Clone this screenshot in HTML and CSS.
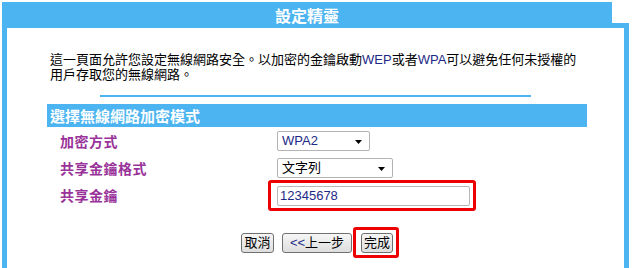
FILE: index.html
```html
<!DOCTYPE html>
<html lang="zh-Hant">
<head>
<meta charset="utf-8">
<title>設定精靈</title>
<link rel="stylesheet" href="styles.css">
</head>
<body>
<div class="wizard">
  <div class="top">
    <div class="title">設定精靈</div>
    <div class="notch"></div>
  </div>
  <div class="frame">
    <p class="intro">這一頁面允許您設定無線網路安全。以加密的金鑰啟動<span class="lat">WEP</span>或者<span class="lat">WPA</span>可以避免任何未授權的用戶存取您的無線網路。</p>
    <div class="rule"></div>
    <div class="section">選擇無線網路加密模式</div>
    <div class="form">
      <div class="label">加密方式</div>
      <div class="ctl">
        <div class="sel sel-a">
          <select><option>WPA2</option></select>
          <svg class="arrow" width="7" height="4" viewBox="0 0 7 4"><path d="M0 0H7L3.5 4Z" fill="#000"/></svg>
        </div>
      </div>
      <div class="label">共享金鑰格式</div>
      <div class="ctl">
        <div class="sel sel-b">
          <select><option>文字列</option></select>
          <svg class="arrow" width="7" height="4" viewBox="0 0 7 4"><path d="M0 0H7L3.5 4Z" fill="#000"/></svg>
        </div>
      </div>
      <div class="label">共享金鑰</div>
      <div class="ctl">
        <div class="mark mark-input"><input class="key" type="text" value="12345678"></div>
      </div>
    </div>
    <div class="actions">
      <button class="btn btn-cancel">取消</button>
      <button class="btn btn-back"><span class="lat">&lt;&lt;</span>上一步</button>
      <div class="mark mark-btn"><button class="btn btn-done">完成</button></div>
    </div>
  </div>
</div>
</body>
</html>
```

FILE: styles.css
```css
* { box-sizing: border-box; }
html, body { margin: 0; padding: 0; background: #fff; }
body {
  font-family: "Liberation Sans", "Noto Sans CJK TC", sans-serif;
  font-size: 13px;
  color: #000;
  width: 632px;
  height: 268px;
  overflow: hidden;
}
.wizard { padding: 2px 0 0 2px; width: 629px; }
.top { display: flex; }
.title {
  width: 610px;
  height: 26px;
  line-height: 26px;
  background: #4cb4f0;
  color: #fff;
  font-weight: bold;
  font-size: 16px;
  text-align: center;
  font-family: "Noto Sans CJK TC", sans-serif;
}
.notch { width: 17px; height: 5px; margin-top: 21px; background: #4cb4f0; }
.frame {
  width: 627px;
  height: 240px;
  border-left: 5px solid #4cb4f0;
  border-right: 5px solid #4cb4f0;
}
.intro {
  margin: 0;
  padding: 24px 0 0 43px;
  width: 575px;
  line-height: 15px;
}
.lat { color: #1c2a86; }
.rule { margin: 13px 0 0 93px; width: 431px; height: 2px; background: #4cb4f0; }
.section {
  margin: 7px 0 0 40px;
  width: 540px;
  height: 23px;
  line-height: 23px;
  padding-left: 3px;
  background: #4cb4f0;
  color: #fff;
  font-weight: bold;
  font-size: 15px;
  font-family: "Noto Sans CJK TC", sans-serif;
}
.form {
  display: grid;
  grid-template-columns: 217px auto;
  grid-template-rows: 27px 27px 28px;
  padding-left: 53px;
  align-items: center;
}
.label {
  color: #993399;
  font-weight: bold;
  font-size: 14px;
  letter-spacing: 0.5px;
  font-family: "Noto Sans CJK TC", sans-serif;
}
.ctl { display: flex; align-items: center; }
.sel { position: relative; height: 20px; }
.sel select {
  appearance: none;
  -webkit-appearance: none;
  height: 20px;
  border: 1px solid #b4b4b4;
  border-radius: 2px;
  background: #fff;
  font-family: "Liberation Sans", "Noto Sans CJK TC", sans-serif;
  font-size: 13px;
  color: #1c2a86;
  padding: 0 0 0 4px;
  margin: 0;
  outline: none;
}
.sel-a select { width: 93px; }
.sel-b select { width: 116px; color: #000; }
.arrow { position: absolute; right: 8px; top: 9px; }
.mark {
  display: inline-flex;
  border: 3px solid #ee0000;
  border-radius: 3px;
}
.mark-input { margin-left: -9px; padding: 3px 3px 2px 6px; }
.key {
  width: 193px;
  height: 20px;
  margin: 0;
  border: 1px solid #b8b8b8;
  border-radius: 2px;
  padding: 0 0 0 2px;
  font-family: "Liberation Sans", sans-serif;
  font-size: 13px;
  color: #1c2a86;
  outline: none;
}
.actions {
  display: flex;
  align-items: center;
  margin-top: 18px;
  padding-left: 234px;
}
.btn {
  height: 20px;
  margin: 0;
  padding: 0;
  border: 1px solid #707070;
  border-radius: 3px;
  background: linear-gradient(#f6f6f6, #dedede);
  font-family: "Liberation Sans", "Noto Sans CJK TC", sans-serif;
  font-size: 13px;
  color: #000;
  line-height: 18px;
}
.btn-cancel { width: 33px; }
.btn-back { width: 70px; margin-left: 8px; }
.btn-done { width: 32px; }
.mark-btn { margin-left: 1px; padding: 3px 3px 2px 5px; }
```
